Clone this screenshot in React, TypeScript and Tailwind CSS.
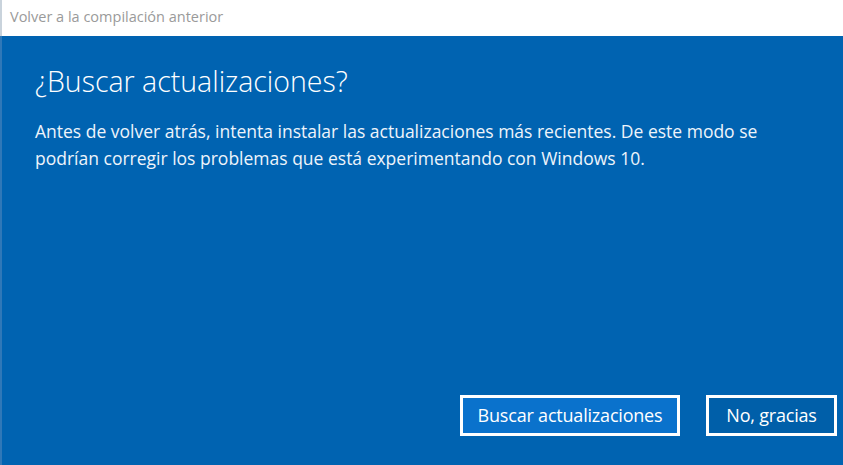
export default function App() {
  return (
    <div className="w-[843px] h-[465px] flex flex-col bg-white font-['Open_Sans',sans-serif] overflow-hidden">
      <div className="h-[36px] shrink-0 flex items-center pl-[8px] border-l-2 border-[#c9d3dc]">
        <span className="text-[14.5px] text-[#9a9a9a] leading-none pb-[2px]">Volver a la compilación anterior</span>
      </div>
      <div className="flex-1 flex flex-col bg-[#0063b1] border-l-2 border-[#2f78b8] pl-[33px] pr-[6px]">
        <h1 className="mt-[25px] text-[28.5px] font-light text-white leading-[40px]">¿Buscar actualizaciones?</h1>
        <div className="mt-[17px] text-[17.5px] text-[#eef4fb] leading-[27px]">
          <p className="whitespace-nowrap">Antes de volver atrás, intenta instalar las actualizaciones más recientes. De este modo se</p>
          <p className="whitespace-nowrap">podrían corregir los problemas que está experimentando con Windows 10.</p>
        </div>
        <div className="mt-auto mb-[29px] flex justify-end gap-[26px]">
          <button className="w-[220px] h-[41px] border-[3px] border-white bg-[#0a72cc] text-white text-[18px] tracking-[-0.2px]">Buscar actualizaciones</button>
          <button className="w-[131px] h-[41px] border-[3px] border-white bg-[#005fa9] text-white text-[18px] tracking-[-0.2px]">No, gracias</button>
        </div>
      </div>
    </div>
  )
}
